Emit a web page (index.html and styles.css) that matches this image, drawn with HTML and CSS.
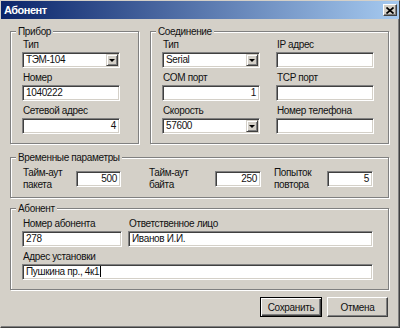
FILE: index.html
```html
<!DOCTYPE html>
<html lang="ru">
<head>
  <meta charset="UTF-8" />
  <title>Абонент</title>
  <link rel="stylesheet" href="styles.css">
</head>
<body>
  <div class="window">
    <div class="titlebar">
      <span class="title">Абонент</span>
      <span class="close-btn">
        <svg width="8" height="7" viewBox="0 0 8 7">
          <path d="M0.5 0.5 L7.5 6.5 M7.5 0.5 L0.5 6.5" stroke="#000" stroke-width="1.7" />
        </svg>
      </span>
    </div>

    <div class="dialog">
      <div class="top-row">
        <fieldset class="group group-device">
          <legend>Прибор</legend>
          <div class="group-body stack">
            <div class="field">
              <label>Тип</label>
              <div class="combo"><span class="combo-value">ТЭМ-104</span><span class="combo-btn"><i class="arrow"></i></span></div>
            </div>
            <div class="field">
              <label>Номер</label>
              <div class="input">1040222</div>
            </div>
            <div class="field">
              <label>Сетевой адрес</label>
              <div class="input num">4</div>
            </div>
          </div>
        </fieldset>

        <fieldset class="group group-conn">
          <legend>Соединение</legend>
          <div class="group-body conn-grid">
            <div class="stack">
              <div class="field">
                <label>Тип</label>
                <div class="combo"><span class="combo-value">Serial</span><span class="combo-btn"><i class="arrow"></i></span></div>
              </div>
              <div class="field">
                <label>COM порт</label>
                <div class="input num">1</div>
              </div>
              <div class="field">
                <label>Скорость</label>
                <div class="combo"><span class="combo-value">57600</span><span class="combo-btn"><i class="arrow"></i></span></div>
              </div>
            </div>
            <div class="stack">
              <div class="field">
                <label>IP адрес</label>
                <div class="input"></div>
              </div>
              <div class="field">
                <label>TCP порт</label>
                <div class="input"></div>
              </div>
              <div class="field">
                <label>Номер телефона</label>
                <div class="input"></div>
              </div>
            </div>
          </div>
        </fieldset>
      </div>

      <fieldset class="group group-timing">
        <legend>Временные параметры</legend>
        <div class="group-body timing-row">
          <div class="tcell cell-packet">
            <label>Тайм-аут<br>пакета</label>
            <div class="input num">500</div>
          </div>
          <div class="tcell cell-byte">
            <label>Тайм-аут<br>байта</label>
            <div class="input num">250</div>
          </div>
          <div class="tcell cell-retry">
            <label>Попыток<br>повтора</label>
            <div class="input num">5</div>
          </div>
        </div>
      </fieldset>

      <fieldset class="group group-subscriber">
        <legend>Абонент</legend>
        <div class="group-body stack">
          <div class="sub-row">
            <div class="field field-number">
              <label>Номер абонента</label>
              <div class="input">278</div>
            </div>
            <div class="field field-person">
              <label>Ответственное лицо</label>
              <div class="input">Иванов И.И.</div>
            </div>
          </div>
          <div class="field field-address">
            <label>Адрес установки</label>
            <div class="input">Пушкина пр., 4к1<span class="caret"></span></div>
          </div>
        </div>
      </fieldset>

      <div class="buttons">
        <button class="btn btn-default">Сохранить</button>
        <button class="btn">Отмена</button>
      </div>
    </div>
  </div>
</body>
</html>
```

FILE: styles.css
```css
* {
  box-sizing: border-box;
}
body {
  margin: 0;
  background: #d4d0c8;
  font-family: 'Liberation Sans', Arial, sans-serif;
  font-size: 10px;
  letter-spacing: -0.35px;
  color: #111;
}
.window {
  width: 400px;
  height: 328px;
  background: #d4d0c8;
  border: 1px solid;
  border-color: #d4d0c8 #404040 #404040 #d4d0c8;
  box-shadow: inset -1px -1px 0 #808080;
}
.titlebar {
  height: 18px;
  display: flex;
  align-items: center;
  justify-content: space-between;
  padding: 0 2px 0 3px;
  background: linear-gradient(to right, #0a246a, #a6caf0);
}
.title {
  color: #fff;
  font-weight: bold;
  font-size: 11px;
  letter-spacing: -0.5px;
}
.close-btn {
  width: 14px;
  height: 12px;
  display: flex;
  align-items: center;
  justify-content: center;
  background: #d4d0c8;
  border: 1px solid;
  border-color: #fff #404040 #404040 #fff;
  box-shadow: inset -1px -1px 0 #808080;
}
.dialog {
  padding: 6px 10px 0 9px;
}
.top-row {
  display: flex;
  gap: 11px;
}

/* etched group box */
.group {
  margin: 0;
  padding: 0;
  min-width: 0;
  border: 1px solid #808080;
  box-shadow: inset 1px 1px 0 #fff, 1px 1px 0 #fff;
}
.group legend {
  margin-left: 5px;
  padding: 0 2px;
  line-height: 13px;
  background: #d4d0c8;
}
.group-device {
  width: 129px;
}
.group-conn {
  width: 239px;
}
.group-device .group-body,
.group-conn .group-body {
  padding: 0 0 9px 11px;
}
.stack {
  display: flex;
  flex-direction: column;
  gap: 3px;
}
.conn-grid {
  display: grid;
  grid-template-columns: 98px 98px;
  column-gap: 16px;
}
.field {
  display: flex;
  flex-direction: column;
  width: 98px;
}
.field label {
  line-height: 13px;
  margin-bottom: 1px;
  padding-left: 1px;
  white-space: nowrap;
}

/* sunken controls */
.input,
.combo {
  height: 16px;
  background: #fff;
  border: 1px solid;
  border-color: #808080 #fff #fff #808080;
  box-shadow: inset 1px 1px 0 #404040, inset -1px -1px 0 #d4d0c8;
  line-height: 14px;
  padding: 0 3px;
  white-space: nowrap;
  overflow: hidden;
}
.input.num {
  text-align: right;
}
.combo {
  display: flex;
  padding: 1px 1px 1px 3px;
  line-height: 12px;
}
.combo-value {
  flex: 1;
}
.combo-btn {
  width: 12px;
  height: 12px;
  display: flex;
  align-items: center;
  justify-content: center;
  background: #d4d0c8;
  border: 1px solid;
  border-color: #d4d0c8 #404040 #404040 #d4d0c8;
  box-shadow: inset 1px 1px 0 #fff, inset -1px -1px 0 #808080;
}
.arrow {
  width: 0;
  height: 0;
  border-left: 3px solid transparent;
  border-right: 3px solid transparent;
  border-top: 3px solid #000;
  margin-top: 1px;
}

/* timing */
.group-timing {
  margin-top: 7px;
}
.timing-row {
  display: flex;
  align-items: center;
  padding: 3px 0 6px 12px;
}
.tcell {
  display: flex;
  align-items: center;
}
.tcell label {
  line-height: 12px;
}
.cell-packet label { width: 53px; }
.cell-packet .input { width: 45px; }
.cell-byte { margin-left: 28px; }
.cell-byte label { width: 66px; }
.cell-byte .input { width: 46px; }
.cell-retry { margin-left: 13px; }
.cell-retry label { width: 53px; }
.cell-retry .input { width: 46px; }

/* subscriber */
.group-subscriber {
  margin-top: 4px;
}
.group-subscriber .group-body {
  padding: 2px 0 9px 11px;
}
.sub-row {
  display: flex;
  gap: 6px;
}
.field-number { width: 100px; }
.field-person { width: 245px; }
.field-address { width: 351px; }
.caret {
  display: inline-block;
  width: 1px;
  height: 11px;
  margin-left: 1px;
  background: #000;
  vertical-align: -2px;
}

/* buttons */
.buttons {
  display: flex;
  justify-content: flex-end;
  gap: 5px;
  margin-top: 7px;
  padding-right: 1px;
}
.btn {
  height: 20px;
  width: 61px;
  padding: 0;
  font-family: inherit;
  font-size: 10px;
  letter-spacing: inherit;
  color: #111;
  background: #d4d0c8;
  border: 1px solid;
  border-color: #fff #404040 #404040 #fff;
  box-shadow: inset -1px -1px 0 #808080;
}
.btn-default {
  width: 62px;
  border-color: #000;
  box-shadow: inset 1px 1px 0 #fff, inset -1px -1px 0 #404040, inset -2px -2px 0 #808080;
}
```
